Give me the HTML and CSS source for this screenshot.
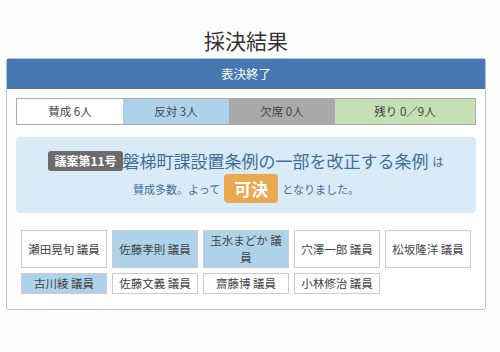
FILE: index.html
```html
<!DOCTYPE html>
<html lang="ja">

<head>
    <meta charset="utf-8">
    <title>採決結果</title>
    <link rel="stylesheet" href="styles.css">
</head>

<body>
    <div class="page">
        <h1 class="title">採決結果</h1>

        <div class="panel">
            <div class="panel-heading">表決終了</div>
            <div class="panel-body">

                <div class="counts">
                    <div class="count count-yes">賛成 6人</div>
                    <div class="count count-no">反対 3人</div>
                    <div class="count count-absent">欠席 0人</div>
                    <div class="count count-left">残り 0／9人</div>
                </div>

                <div class="result">
                    <div class="result-line">
                        <span class="bill-no">議案第11号</span>
                        <span class="bill-name">磐梯町課設置条例の一部を改正する条例</span>
                        <span class="small">は</span>
                    </div>
                    <div class="result-line">
                        <span class="small">賛成多数。よって</span>
                        <span class="verdict">可決</span>
                        <span class="small">となりました。</span>
                    </div>
                </div>

                <div class="members">
                    <div class="member">瀬田晃旬 議員</div>
                    <div class="member against">佐藤孝則 議員</div>
                    <div class="member against">玉水まどか 議員</div>
                    <div class="member">穴澤一郎 議員</div>
                    <div class="member">松坂隆洋 議員</div>
                    <div class="member against">古川綾 議員</div>
                    <div class="member">佐藤文義 議員</div>
                    <div class="member">齋藤博 議員</div>
                    <div class="member">小林修治 議員</div>
                </div>

            </div>
        </div>
    </div>
</body>

</html>
```

FILE: styles.css
```css
body {
    margin: 0;
    background: #fdfdfd;
    color: #333;
    font-family: "Noto Sans CJK JP", "Noto Sans", sans-serif;
}

.page {
    width: 480px;
    padding: 0 6px;
}

.title {
    margin: 0;
    padding-top: 25px;
    height: 33px;
    font-size: 21px;
    font-weight: normal;
    line-height: 30px;
    text-align: center;
}

.panel {
    border: 1px solid #a9c4e4;
    border-radius: 3px;
    background: #fff;
}

.panel-heading {
    height: 30px;
    line-height: 30px;
    background: #4678b1;
    color: #fff;
    font-size: 12.5px;
    text-align: center;
}

.panel-body {
    padding: 9px 9px 15px;
}

.counts {
    display: flex;
    height: 25px;
    border: 1px solid #aaa;
}

.count {
    width: 106px;
    line-height: 25px;
    font-size: 11.5px;
    color: #444;
    text-align: center;
}

.count-yes {
    background: #fff;
}

.count-no {
    background: #acd3ea;
}

.count-absent {
    background: #a9a9a9;
}

.count-left {
    flex: 1;
    background: #c5e0b4;
}

.result {
    margin-top: 12px;
    padding: 13px 0 10px;
    background: #d9ebf6;
    border-radius: 4px;
    color: #3f6f98;
    text-align: center;
}

.result-line {
    display: flex;
    justify-content: center;
    align-items: center;
    gap: 4px;
}

.result-line + .result-line {
    margin-top: 2px;
}

.bill-no {
    padding: 0 6px;
    height: 20px;
    line-height: 20px;
    background: #6b6b6b;
    border-radius: 3px;
    color: #fff;
    font-size: 12px;
    font-weight: bold;
    margin-right: -4px;
}

.bill-name {
    font-size: 17px;
    line-height: 22px;
}

.small {
    font-size: 11px;
}

.verdict {
    padding: 0 10px;
    height: 29px;
    line-height: 29px;
    background: #e8a951;
    border-radius: 4px;
    color: #fff;
    font-size: 17px;
    font-weight: bold;
}

.members {
    display: grid;
    grid-template-columns: repeat(5, 86px);
    gap: 5px;
    margin: 17px 5px 0;
}

.member {
    display: flex;
    align-items: center;
    justify-content: center;
    padding: 1px 4px;
    border: 1px solid #ccc;
    font-size: 11.5px;
    line-height: 17px;
    color: #444;
    text-align: center;
}

.member.against {
    background: #acd3ea;
}
```
